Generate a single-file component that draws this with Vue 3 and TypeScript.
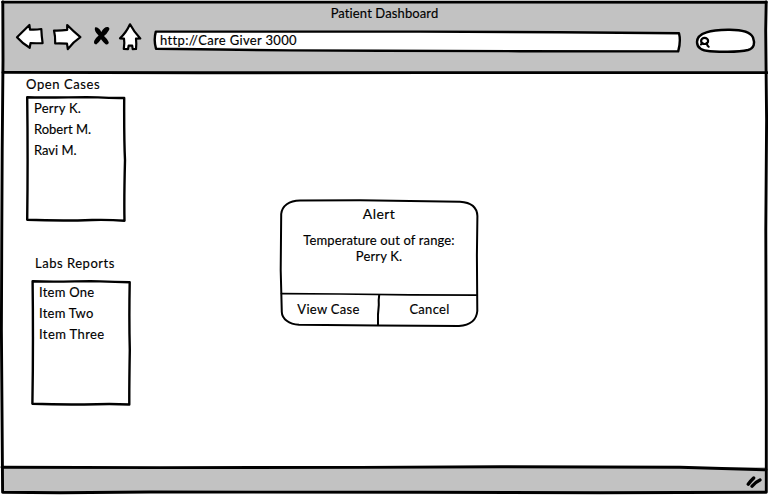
<script setup lang="ts">
interface CaseList {
  id: string
  title: string
  outline: string
  viewBox: string
  items: { label: string; spacing: string }[]
}

const lists: CaseList[] = [
  {
    id: 'cases',
    title: 'Open Cases',
    viewBox: '25 95 102 127',
    outline: 'M27.2 97.3 C50 98.2 85 96.6 98 97.4 Q112 98.2 124.2 98 Q124 140 125 160 Q124 200 124.5 220.8 Q110 219.6 92 220 Q60 221.2 27.2 219.7 Q28 160 27.2 97.3 Z',
    items: [
      { label: 'Perry K.', spacing: 'normal' },
      { label: 'Robert M.', spacing: 'tight' },
      { label: 'Ravi M.', spacing: 'tight' },
    ],
  },
  {
    id: 'labs',
    title: 'Labs Reports',
    viewBox: '30 279 102 127',
    outline: 'M32.6 281.3 C60 282.2 85 280.8 100 281.4 Q115 282.2 129.7 282.2 Q129 320 129.8 350 Q129.2 385 129.3 404.5 Q112 403.6 97 404.2 Q65 405 32.4 403.8 Q33.4 345 32.6 281.3 Z',
    items: [
      { label: 'Item One', spacing: 'normal' },
      { label: 'Item Two', spacing: 'normal' },
      { label: 'Item Three', spacing: 'wide' },
    ],
  },
]
</script>

<template>
  <div class="browser">
    <header class="chrome">
      <h1 class="title">Patient Dashboard</h1>
      <div class="toolbar">
        <svg class="nav" viewBox="14 20 132 34">
          <g class="icon">
            <path d="M17 37.2 L29.4 25 L30 29.6 Q36 30 41.3 29 Q41.6 36 42.6 43.2 Q36 43.3 30.5 43.2 L29.7 47.8 Q22 43 17 37.2 Z" />
            <path d="M54 30.5 Q60 30.8 67.2 29.8 L67.2 25 Q73 31 80.4 37.1 Q73 42 67.8 49.2 L67 43.7 Q60 43.2 55.2 43.5 Q55.4 36 54 30.5 Z" />
            <path d="M130 24.3 Q134 32 140.3 38.4 L136 38.6 Q136.6 44 136 49 L132.7 49.1 L132.2 45.7 L128.7 45.5 L128 49.1 L123.8 49 Q124.8 43 124 38.6 L120 38.3 Q126 33 130 24.3 Z" />
          </g>
          <path class="cross" d="M95 27.4 Q98.5 26.8 101.3 32 Q104.5 26.2 108 27 Q110.6 28 108.4 31 Q106.8 34 104 36 Q107.5 39 108.8 42.2 Q108.6 45 105.6 44.2 Q103 42 101 39.2 Q98.6 43 96.2 44.4 Q93 44 94.4 40.6 Q96 37.4 98.6 35.4 Q93.8 31 95 27.4 Z" />
        </svg>
        <div class="address">
          <svg class="sketch" viewBox="152 29 530 24">
            <path class="box" d="M155.8 31.6 L420 31.6 L560 32.3 L679 33.2 Q681 41 678.2 51.4 L520 51.2 L380 50.8 L290 50.4 L220 49.5 L156 48.7 Q153.5 40 155.8 31.6 Z" />
          </svg>
          <span class="url">http://Care Giver 3000</span>
        </div>
        <svg class="search" viewBox="694 27 62 28">
          <path class="box" d="M697 42 C697 32 712 30.2 728 29.8 C740 29.6 750 31 753 37.5 C755 43 754.5 48 748 50 C738 52.6 724 52 710 51.2 C701 50.6 697 47 697 42 Z" />
          <ellipse cx="704.6" cy="40.9" rx="3.5" ry="3.1" />
          <path class="handle" d="M706.8 43 Q707 46 708.6 46.7 M702.5 43.2 L701 44.3" />
        </svg>
      </div>
    </header>

    <main class="page">
      <aside class="sidebar">
        <section v-for="list in lists" :key="list.id" :class="['group', list.id]">
          <h2>{{ list.title }}</h2>
          <div class="list">
            <svg class="sketch" :viewBox="list.viewBox"><path class="box" :d="list.outline" /></svg>
            <ul>
              <li v-for="item in list.items" :key="item.label" :class="item.spacing">{{ item.label }}</li>
            </ul>
          </div>
        </section>
      </aside>

      <section class="alert" role="alertdialog">
        <svg class="sketch" viewBox="278 198 202 130">
          <path class="box" d="M300 200.5 L360 200.3 L460 201.8 C471 202.5 477 207 477.4 216 L476.9 255 L477.3 311 C476.5 320 470 325.2 459 326 L378 325.6 L299 324.8 C289 324.2 282 319 281.8 312 L280.7 270 L281.2 214 C282 206 289 200.6 300 200.5 Z" />
          <path class="divider" d="M281.5 293.6 L340 294 L410 294.8 L477 295.1" />
          <path class="split" d="M379.2 295 Q378.4 300 378.8 305 Q377.6 314 378 325" />
        </svg>
        <h3>Alert</h3>
        <p>Temperature out of range:<br />Perry K.</p>
        <div class="actions">
          <button type="button">View Case</button>
          <button type="button">Cancel</button>
        </div>
      </section>
    </main>

    <footer class="status">
      <svg class="grip" viewBox="744 473 20 18">
        <path d="M748.2 484.2 Q750.5 481 753.7 478 M752 486.3 Q755.5 482 760 480" />
      </svg>
    </footer>

    <svg class="frame" viewBox="0 0 768 495">
      <path d="M2.6 2.1 L300 2.1 L766.2 2.2" />
      <path d="M2.8 2 L3 60 L2.2 150 L1.8 230 L1.4 330 L2 410 L2.6 492.3 L60 492.8 L150 492 L420 492.2 L600 492.7 L766.3 492.3 L766.3 400 L765.8 230 L766.6 120 L765.7 30 L766.2 2" />
      <path d="M3 72.4 L200 72.8 L430 72.6 L767 72.6" />
      <path d="M2 467.2 L160 467.6 L360 467.4 L500 466.8 L680 467.2 L766 469.8" />
    </svg>
  </div>
</template>

<style>
body {
  background: #fff;
}
</style>

<style scoped>
.browser {
  position: relative;
  display: grid;
  grid-template-rows: 73px 394px 28px;
  width: 768px;
  height: 495px;
  overflow: hidden;
  box-sizing: border-box;
  font-family: Lato, "Open Sans", sans-serif;
  font-size: 13px;
  line-height: 16px;
  color: #000;
  -webkit-text-stroke: 0.15px #000;
}
h1, h2, h3, p, ul {
  margin: 0;
  padding: 0;
  font-size: inherit;
  font-weight: 400;
}
svg {
  display: block;
  fill: none;
  stroke: #000;
  stroke-linecap: round;
  stroke-linejoin: round;
}
.chrome {
  margin: 1px 1px 0 2px;
  padding-top: 4px;
  background: #c2c2c2;
}
.title {
  text-align: center;
  height: 15px;
  letter-spacing: 0.12px;
}
.toolbar {
  display: flex;
  align-items: flex-start;
  padding-left: 12px;
}
.nav {
  width: 132px;
  height: 34px;
}
.icon {
  fill: #fff;
  stroke-width: 2.2;
}
.cross {
  fill: #000;
  stroke: none;
}
.address {
  position: relative;
  width: 530px;
  height: 24px;
  margin: 9px 12px 0 6px;
}
.url {
  position: relative;
  display: block;
  padding: 3px 0 0 8px;
  letter-spacing: 0.34px;
}
.sketch {
  position: absolute;
  inset: 0;
  width: 100%;
  height: 100%;
}
.box {
  fill: #fff;
  stroke-width: 2.4;
}
.search {
  width: 62px;
  height: 28px;
  margin-top: 7px;
  stroke-width: 2.2;
}
.handle {
  stroke-width: 2.2;
}
.page {
  display: flex;
}
.sidebar {
  width: 278px;
}
.group {
  padding: 3px 0 0 25px;
}
.group h2 {
  height: 19px;
  padding-left: 1px;
  letter-spacing: 0.6px;
}
.labs {
  padding: 33px 0 0 30px;
}
.labs h2 {
  height: 24px;
  padding-left: 5px;
  letter-spacing: 0.52px;
}
.list {
  position: relative;
  width: 102px;
  height: 127px;
}
.list ul {
  position: relative;
  list-style: none;
  padding: 5px 0 0 9px;
}
.list li {
  height: 21px;
}
.tight {
  letter-spacing: 0;
}
.normal {
  letter-spacing: 0.25px;
}
.wide {
  letter-spacing: 0.4px;
}
.alert {
  position: relative;
  width: 202px;
  height: 130px;
  margin-top: 125px;
  text-align: center;
}
.alert .box {
  stroke-width: 2;
}
.divider {
  stroke-width: 1.7;
}
.split {
  stroke-width: 2;
}
.alert h3,
.alert p,
.actions {
  position: relative;
}
.alert h3 {
  padding-top: 8px;
  height: 18px;
  font-size: 14px;
  letter-spacing: 0.4px;
}
.alert p {
  margin-top: 8px;
  height: 61px;
  letter-spacing: 0.14px;
}
.actions {
  display: grid;
  grid-template-columns: 1fr 1fr;
}
.actions button {
  height: 31px;
  padding: 0;
  border: 0;
  background: none;
  color: inherit;
  font: inherit;
  letter-spacing: 0.3px;
  -webkit-text-stroke: inherit;
}
.status {
  display: flex;
  justify-content: flex-end;
  align-items: flex-start;
  margin: 0 2px 2px;
  padding: 6px 2px 0 0;
  background: #c2c2c2;
}
.grip {
  width: 20px;
  height: 18px;
  stroke-width: 3.4;
}
.frame {
  position: absolute;
  inset: 0;
  width: 768px;
  height: 495px;
  stroke-width: 2.9;
  pointer-events: none;
}
</style>
